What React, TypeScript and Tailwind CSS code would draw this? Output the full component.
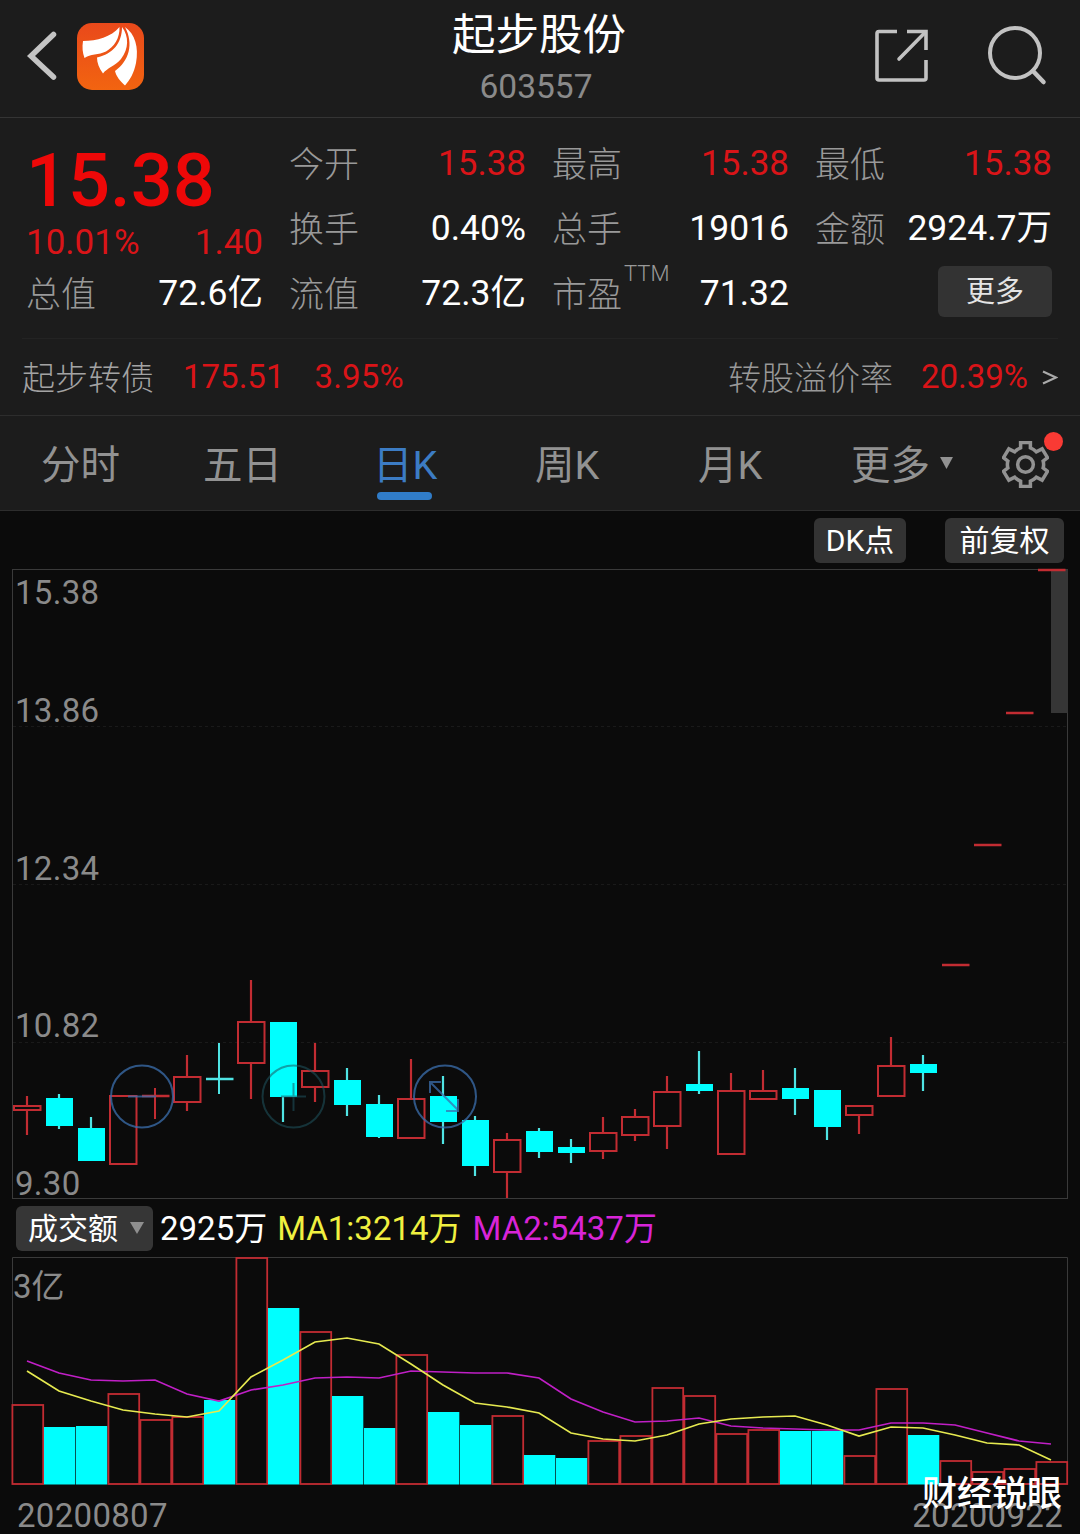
import clsx from 'clsx';

type Candle = {
  up: boolean;
  top: number;
  bottom: number;
  high: number;
  low: number;
};

const STEP = 32;
const FIRST_X = 27;

const c = (up: boolean, top: number, bottom: number, high = top, low = bottom): Candle => ({
  up,
  top,
  bottom,
  high,
  low,
});

const candles: Candle[] = [
  c(true, 1106, 1110, 1096, 1135),
  c(false, 1098, 1126, 1094, 1129),
  c(false, 1128, 1161, 1117),
  c(true, 1096, 1164),
  c(true, 1096, 1096, 1088, 1119),
  c(true, 1077, 1102, 1055, 1111),
  c(false, 1079, 1079, 1043, 1094),
  c(true, 1022, 1063, 980, 1099),
  c(false, 1022, 1097, 1022, 1122),
  c(true, 1071, 1087, 1043, 1102),
  c(false, 1080, 1105, 1068, 1116),
  c(false, 1104, 1137, 1095, 1138),
  c(true, 1099, 1138, 1059),
  c(false, 1096, 1122, 1076, 1144),
  c(false, 1120, 1166, 1116, 1176),
  c(true, 1140, 1172, 1133, 1198),
  c(false, 1131, 1152, 1128, 1158),
  c(false, 1147, 1153, 1139, 1163),
  c(true, 1133, 1151, 1117, 1159),
  c(true, 1117, 1135, 1109, 1141),
  c(true, 1092, 1126, 1076, 1149),
  c(false, 1084, 1091, 1051, 1094),
  c(true, 1091, 1154, 1073),
  c(true, 1091, 1099, 1070),
  c(false, 1088, 1099, 1068, 1115),
  c(false, 1090, 1127, 1090, 1140),
  c(true, 1106, 1115, 1106, 1134),
  c(true, 1066, 1096, 1037),
  c(false, 1064, 1073, 1055, 1091),
  c(true, 965, 965),
  c(true, 845, 845),
  c(true, 713, 713),
  c(true, 570, 570),
];

const volumeTops = [
  1405, 1427, 1426, 1394, 1420, 1417, 1400, 1258, 1308, 1332, 1396, 1428, 1355, 1412, 1425, 1416, 1455,
  1458, 1441, 1436, 1388, 1396, 1434, 1430, 1431, 1431, 1456, 1389, 1435, 1461, 1472, 1469, 1462,
];

// volume bars that are drawn solid
const filledVolumes = [1, 2, 6, 8, 10, 11, 13, 14, 16, 17, 24, 25, 28];

const ma1 = [
  1371, 1391, 1401, 1410, 1414, 1417, 1411, 1377, 1360, 1342, 1338, 1344, 1364, 1385, 1403, 1407, 1413,
  1433, 1439, 1441, 1435, 1424, 1419, 1417, 1416, 1425, 1436, 1427, 1428, 1435, 1443, 1445, 1460,
];

const ma2 = [
  1361, 1373, 1380, 1381, 1380, 1394, 1401, 1390, 1385, 1378, 1377, 1378, 1371, 1372, 1373, 1373, 1378,
  1399, 1412, 1422, 1421, 1418, 1426, 1428, 1429, 1430, 1430, 1423, 1423, 1425, 1433, 1441, 1444,
];

const toPoints = (values: number[]) => values.map((y, i) => `${FIRST_X + i * STEP},${y}`).join(' ');

const priceLabels = [
  { text: '15.38', y: 604 },
  { text: '13.86', y: 722 },
  { text: '12.34', y: 880 },
  { text: '10.82', y: 1037 },
  { text: '9.30', y: 1195 },
];

function Header() {
  return (
    <header className="flex h-[118px] items-center border-b border-[#343434] pb-1.5">
      <svg className="ml-[24px] h-[56px] w-[36px]" viewBox="0 0 36 56" fill="none" stroke="#c4c4c4">
        <path d="M29.500 6.500 7 28 29.500 49" strokeWidth="5.500" strokeLinecap="round" strokeLinejoin="miter" />
      </svg>
      <svg className="mt-px ml-[17px] h-[67px] w-[67px]" viewBox="0 0 67 67">
        <defs>
          <linearGradient id="logo" x1="0" y1="0" x2="0" y2="1">
            <stop offset="0" stopColor="#e9491b" />
            <stop offset="1" stopColor="#f26410" />
          </linearGradient>
        </defs>
        <rect width="67" height="67" rx="15" fill="url(#logo)" />
        <path d="M6 18C20 18 34 14 42.500 4C43 15 37 24 29 28.500C22 32 13 31 7.500 35C5.500 30 5 24 6 18Z" fill="#fff" />
        <path d="M45 4C52 13 52 26 44 36C38 43 30 45 26 50.500C22 45 20 40 20 34.500C36 31 45 20 45 4Z" fill="#fff" />
        <path d="M48 4C58 11 62 24 59 40C57 50 53 57 48 62.500C43 58 39 53 38 48C52 38 57 21 48 4Z" fill="#fff" />
      </svg>
      <div className="flex flex-1 flex-col items-center pl-[62px]">
        <h1 className="mt-[8px] h-[52px] text-[43.5px] leading-[54px] text-white">起步股份</h1>
        <span className="mr-[6px] h-[50px] text-[33.5px] leading-[52px] text-[#8a8a8a]">603557</span>
      </div>
      <svg className="h-[58px] w-[58px] shrink-0" viewBox="0 0 58 58" fill="none" stroke="#c2c2c2" strokeWidth="3.600">
        <path d="M25 4.500H7Q5 4.500 5 6.500V51Q5 53 7 53H52Q54 53 54 51V33" />
        <path d="M35 4.500H54V23" />
        <path d="M53 5.500 27 32" strokeLinecap="round" />
      </svg>
      <svg className="mr-[32px] ml-[58px] h-[60px] w-[60px] shrink-0" viewBox="0 0 60 60" fill="none" stroke="#c2c2c2">
        <circle cx="27" cy="27" r="25" strokeWidth="4" />
        <path d="M45 45 55.500 56" strokeWidth="4.500" strokeLinecap="round" />
      </svg>
    </header>
  );
}

type StatProps = { label: string; value: string; red?: boolean; sup?: string };

function Stat({ label, value, red, sup }: StatProps) {
  return (
    <div className="flex h-[65px] items-center justify-between whitespace-nowrap">
      <span className="relative pt-[6px] text-[35px] font-light text-[#999]">
        {label}
        {sup && <span className="absolute -top-[7px] left-[72px] text-[22px]">{sup}</span>}
      </span>
      <span className={clsx('-mr-px', red ? 'pt-[2px] text-[35px] text-[#d91418]' : 'text-[35.5px] text-white')}>
        {value}
      </span>
    </div>
  );
}

function Quote() {
  return (
    <section className="grid h-[220px] grid-cols-4 gap-x-[27px] pt-[13px] pr-[29px] pl-[26px]">
      <div>
        <div className="h-[95px] pt-[6px] text-[74px] leading-[88px] font-medium text-[#ee0808]">15.38</div>
        <div className="-mr-px flex h-[35px] items-center justify-between text-[35px] text-[#d91418]">
          <span>10.01%</span>
          <span>1.40</span>
        </div>
        <Stat label="总值" value="72.6亿" />
      </div>
      <div>
        <Stat label="今开" value="15.38" red />
        <Stat label="换手" value="0.40%" />
        <Stat label="流值" value="72.3亿" />
      </div>
      <div>
        <Stat label="最高" value="15.38" red />
        <Stat label="总手" value="19016" />
        <Stat label="市盈" value="71.32" sup="TTM" />
      </div>
      <div>
        <Stat label="最低" value="15.38" red />
        <Stat label="金额" value="2924.7万" />
        <div className="-mr-px flex h-[61px] items-center justify-end">
          <button className="h-[51px] w-[114px] rounded-md bg-[#333] text-[29px] leading-[50px] text-[#e4e4e4]">
            更多
          </button>
        </div>
      </div>
    </section>
  );
}

function BondRow() {
  return (
    <section className="mx-[22px] flex h-[77px] items-center border-t border-[#232323] text-[33px] whitespace-nowrap">
      <span className="pt-[3px] font-light text-[#a3a3a3]">起步转债</span>
      <span className="ml-[29px] text-[#d91418]">175.51</span>
      <span className="ml-[30px] tracking-[0.2px] text-[#d91418]">3.95%</span>
      <span className="ml-auto pt-[3px] font-light text-[#999]">转股溢价率</span>
      <span className="ml-[28px] text-[#d91418]">20.39%</span>
      <svg className="ml-[14px] h-[16px] w-[16px]" viewBox="0 0 16 16" fill="none" stroke="#aaa" strokeWidth="2.200">
        <path d="M1 2.500 14 8.500 1 14.500" />
      </svg>
    </section>
  );
}

function Tabs() {
  return (
    <nav className="flex h-[96px] items-center border-y border-[#2d2d2d] text-[39.5px] whitespace-nowrap text-[#929292]">
      <span className="ml-[41px] w-[162px] pt-[6px]">分时</span>
      <span className="w-[170px] pt-[6px]">五日</span>
      <span className="relative w-[162px] pt-[6px] text-[#3c7cc4]">
        日K
        <span className="absolute -bottom-[4px] left-[4px] h-[8px] w-[55px] rounded-full bg-[#307cc8]" />
      </span>
      <span className="w-[163px] pt-[6px]">周K</span>
      <span className="w-[153px] pt-[6px]">月K</span>
      <span className="pt-[6px]">更多</span>
      <svg className="ml-[10px] h-[12px] w-[13px]" viewBox="0 0 14 13" fill="#929292">
        <path d="M0 0H14L7 13Z" />
      </svg>
      <div className="relative mt-[2px] ml-[49px] h-[47px] w-[47px]">
        <svg viewBox="1 1 48 48" fill="none" stroke="#929292" strokeWidth="3.600">
          <path d="M20 2.500H30V8Q33 9 36 12L42 9L47.500 18L43 21.500Q44 25 43 28.500L47.500 32L42 41L36 38Q33 41 30 42V47.500H20V42Q17 41 14 38L8 41L2.500 32L7 28.500Q6 25 7 21.500L2.500 18L8 9L14 12Q17 9 20 8Z" />
          <circle cx="25" cy="25" r="8" />
        </svg>
        <span className="absolute -top-[9px] left-[42px] h-[19px] w-[19px] rounded-full bg-[#f93a34]" />
      </div>
    </nav>
  );
}

function CandleShape({ candle, x }: { candle: Candle; x: number }) {
  const { up, top, bottom, high, low } = candle;
  const color = up ? '#c22c32' : '#4fe4e4';

  if (top === bottom) {
    return (
      <g stroke={color} strokeWidth="2">
        <path d={`M${x - 13} ${top}H${x + 14.5}`} strokeWidth="2.500" />
        <path d={`M${x} ${high}V${low}`} />
      </g>
    );
  }

  return (
    <g>
      <path d={`M${x} ${high}V${top}M${x} ${bottom}V${low}`} stroke={color} strokeWidth="2.200" />
      {up ? (
        <rect x={x - 13} y={top} width="26.500" height={bottom - top} fill="none" stroke={color} strokeWidth="2" />
      ) : (
        <rect x={x - 13} y={top} width="27" height={bottom - top} fill="#00ffff" />
      )}
    </g>
  );
}

function PriceChart() {
  return (
    <svg className="block h-[631px] w-full overflow-visible" viewBox="0 569 1080 631" fill="none">
      <rect x="12.500" y="569.500" width="1055" height="629" stroke="#3a3a3a" />
      <g stroke="#1a1a1a" strokeDasharray="3 3">
        <path d="M13 726.500H1067" />
        <path d="M13 884.500H1067" />
        <path d="M13 1042.500H1067" />
      </g>
      <rect x="1051" y="570" width="17" height="143" fill="#363636" />
      {priceLabels.map((label) => (
        <text key={label.text} x="15" y={label.y} fill="#8a8a8a" fontSize="33" letterSpacing="0.300">
          {label.text}
        </text>
      ))}
      {candles.map((candle, i) => (
        <CandleShape key={i} candle={candle} x={FIRST_X + i * STEP} />
      ))}
      <g stroke="#3b6fae" strokeWidth="2" opacity="0.750">
        <circle cx="142" cy="1096.500" r="31" />
        <path d="M128 1096.500H156" />
        <circle cx="445" cy="1096.500" r="31" />
        <path d="M430 1093V1082H441M431 1083 458 1110M458 1099V1111H446" />
      </g>
      <g stroke="#1f5560" strokeWidth="2" opacity="0.550">
        <circle cx="293.500" cy="1096.500" r="31" />
        <path d="M293.500 1083V1111M281 1096.500H306" />
      </g>
    </svg>
  );
}

function VolumeChart() {
  return (
    <svg className="block h-[229px] w-full" viewBox="0 1257 1080 229" fill="none">
      <path d="M12.500 1484V1257.500H1067.500V1484" stroke="#3a3a3a" />
      <text x="13" y="1298" fill="#8a8a8a" fontSize="33">
        3亿
      </text>
      {volumeTops.map((top, i) => {
        const x = 12 + i * STEP;
        return filledVolumes.includes(i) ? (
          <rect key={i} x={x} y={top} width="31.300" height={1484.5 - top} fill="#00ffff" />
        ) : (
          <rect key={i} x={x + 0.4} y={top} width="30.800" height={1484 - top} stroke="#c22c32" strokeWidth="1.800" />
        );
      })}
      <polyline points={toPoints(ma2)} stroke="#c01fc6" strokeWidth="1.700" />
      <polyline points={toPoints(ma1)} stroke="#e6ea50" strokeWidth="1.700" />
    </svg>
  );
}

function VolumeLegend() {
  return (
    <div className="flex h-[57px] items-center text-[33px] whitespace-nowrap">
      <button className="mb-[1px] ml-[16px] flex h-[45px] w-[137px] items-center rounded-md bg-[#363636] pl-[12px] text-[30px] text-white">
        成交额
        <svg className="ml-[12px] h-[12px] w-[14px]" viewBox="0 0 14 12" fill="#8f8f8f">
          <path d="M0 0H14L7 12Z" />
        </svg>
      </button>
      <span className="ml-[7px] text-white">2925万</span>
      <span className="ml-[10px] text-[#f0f040]">MA1:3214万</span>
      <span className="ml-[11px] text-[#d824d8]">MA2:5437万</span>
    </div>
  );
}

export default function App() {
  return (
    <div className="h-[1534px] w-[1080px] overflow-hidden bg-[#1c1c1c] font-['Roboto','Noto_Sans_CJK_SC',sans-serif]">
      <Header />
      <Quote />
      <BondRow />
      <Tabs />
      <main className="h-[1023px] bg-[#0b0b0b]">
        <div className="flex h-[58px] justify-end pt-[7px] pr-[16px] text-[30px] leading-[43px] text-white">
          <button className="h-[45px] w-[92px] rounded-md bg-[#333]">DK点</button>
          <button className="ml-[39px] h-[45px] w-[119px] rounded-md bg-[#333]">前复权</button>
        </div>
        <PriceChart />
        <VolumeLegend />
        <VolumeChart />
        <div className="relative flex h-[48px] items-center justify-between pt-[12px] pr-[17px] pl-[17px] text-[33px] leading-[36px] tracking-[0.3px] text-[#8a8a8a]">
          <span>20200807</span>
          <span>20200922</span>
          <span className="absolute -top-[13px] right-[18px] text-[35px] leading-[44px] font-medium tracking-normal text-white">
            财经锐眼
          </span>
        </div>
      </main>
    </div>
  );
}
